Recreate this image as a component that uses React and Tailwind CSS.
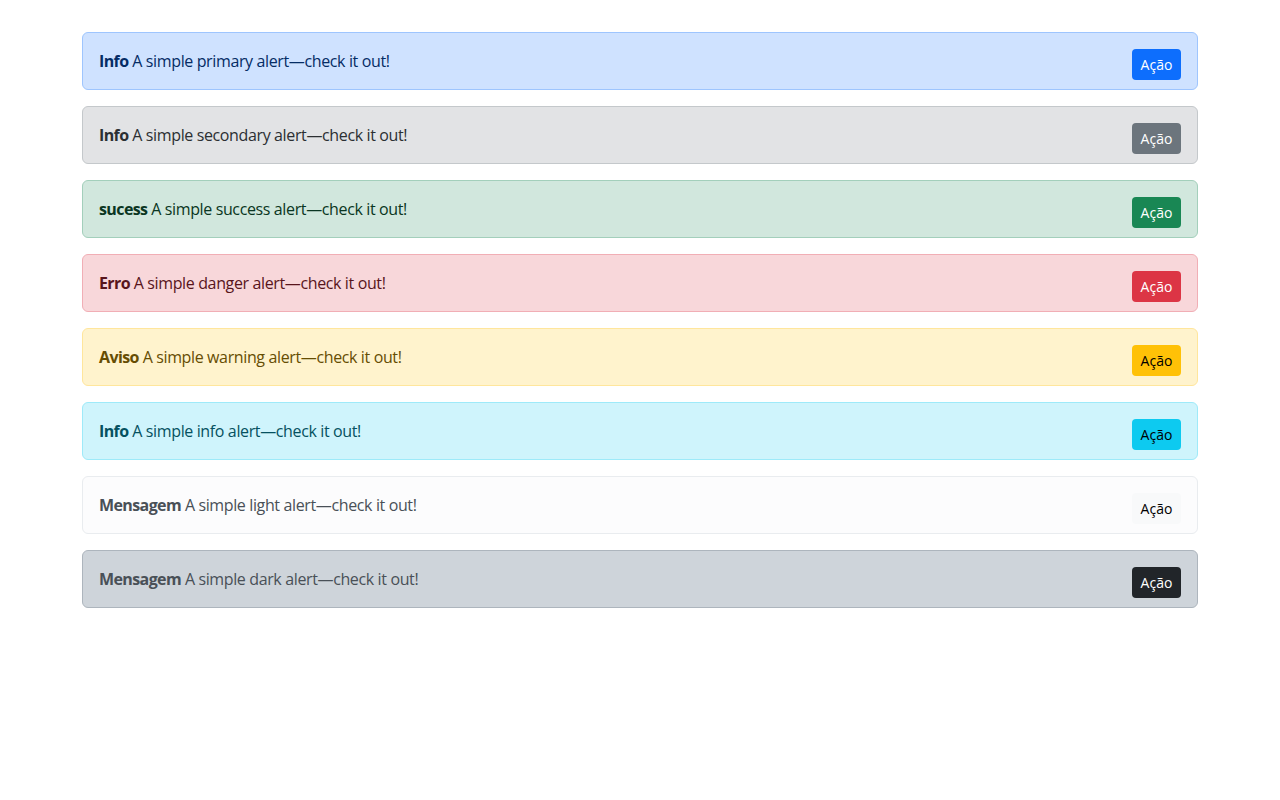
const alerts = [
  { title: 'Info', text: 'A simple primary alert—check it out!', box: 'bg-[#cfe2ff] border-[#9ec5fe] text-[#052c65]', btn: 'bg-[#0d6efd] text-white' },
  { title: 'Info', text: 'A simple secondary alert—check it out!', box: 'bg-[#e2e3e5] border-[#c4c8cb] text-[#2b2f32]', btn: 'bg-[#6c757d] text-white' },
  { title: 'sucess', text: 'A simple success alert—check it out!', box: 'bg-[#d1e7dd] border-[#a3cfbb] text-[#0a3622]', btn: 'bg-[#198754] text-white' },
  { title: 'Erro', text: 'A simple danger alert—check it out!', box: 'bg-[#f8d7da] border-[#f1aeb5] text-[#58151c]', btn: 'bg-[#dc3545] text-white' },
  { title: 'Aviso', text: 'A simple warning alert—check it out!', box: 'bg-[#fff3cd] border-[#ffe69c] text-[#664d03]', btn: 'bg-[#ffc107] text-black' },
  { title: 'Info', text: 'A simple info alert—check it out!', box: 'bg-[#cff4fc] border-[#9eeaf9] text-[#055160]', btn: 'bg-[#0dcaf0] text-black' },
  { title: 'Mensagem', text: 'A simple light alert—check it out!', box: 'bg-[#fcfcfd] border-[#e9ecef] text-[#495057]', btn: 'bg-[#f8f9fa] text-black' },
  { title: 'Mensagem', text: 'A simple dark alert—check it out!', box: 'bg-[#ced4da] border-[#adb5bd] text-[#495057]', btn: 'bg-[#212529] text-white' },
];

export default function App() {
  return (
    <div className="min-h-[800px] bg-white px-[82px] pt-8 font-['Segoe_UI','Open_Sans','Noto_Sans',sans-serif] text-base">
      <div className="flex flex-col gap-4">
        {alerts.map((a, idx) => (
          <div key={idx} className={`flex h-[58px] items-center justify-between rounded-md border px-4 ${a.box}`}>
            <div className="tracking-[-0.37px]"><strong className="font-bold tracking-[-0.6px]">{a.title}</strong> {a.text}</div>
            <button className={`mt-[6px] h-[31px] w-[49px] rounded pt-[2px] text-sm ${a.btn}`}>Ação</button>
          </div>
        ))}
      </div>
    </div>
  );
}
